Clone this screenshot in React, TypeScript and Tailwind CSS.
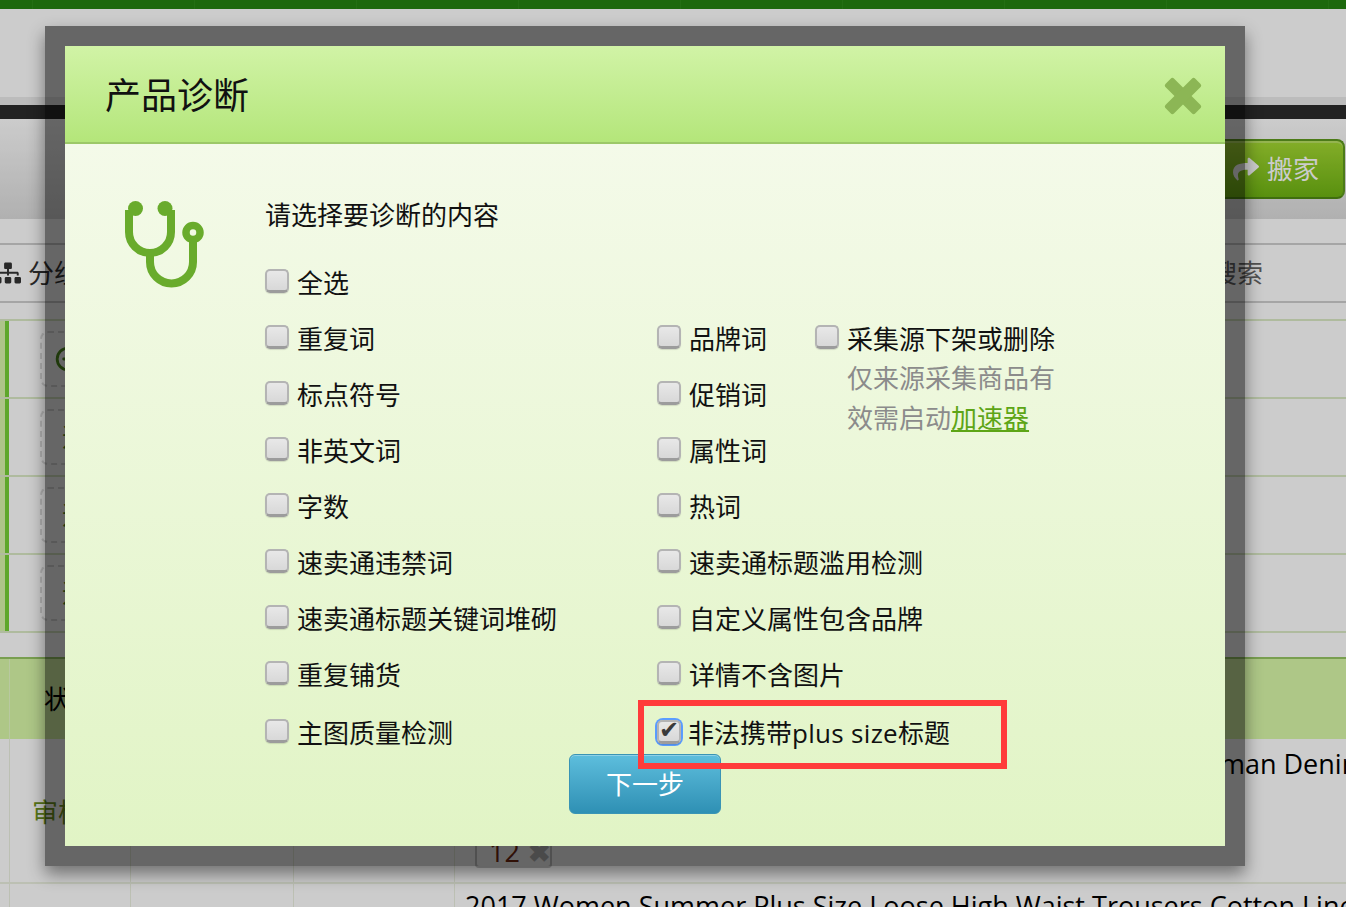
import { FaSitemap, FaShare } from "react-icons/fa";
import { CircleMinus } from "lucide-react";

const font = "font-['Open_Sans','Noto_Sans_CJK_SC',sans-serif]";

function Box() {
  return (
    <input
      type="checkbox"
      readOnly
      className="appearance-none block w-6 h-6 shrink-0 -mt-1 rounded-[5px] border-2 border-b-[3px] border-[#b4b4b4] border-b-[#9c9c9c] bg-gradient-to-b from-[#e8e8e8] to-[#d8d8d8] shadow-[0_1px_1px_rgba(0,0,0,0.12)]"
    />
  );
}

function Item({ label }: { label: string }) {
  return (
    <label className="flex items-center gap-2 h-14 whitespace-nowrap">
      <Box />
      <span>{label}</span>
    </label>
  );
}

const leftItems = ["重复词", "标点符号", "非英文词", "字数", "速卖通违禁词", "速卖通标题关键词堆砌", "重复铺货"];
const rightItems = ["品牌词", "促销词", "属性词", "热词", "速卖通标题滥用检测", "自定义属性包含品牌", "详情不含图片"];

function Stethoscope() {
  return (
    <svg viewBox="0 0 90 96" className="w-[90px] h-[96px]" fill="none" stroke="#69ab2c" strokeWidth="8">
      <path d="M7 9V31A21 21 0 0 0 49 31V9" />
      <path d="M28 52V61A21.5 21.5 0 0 0 71 61V40" />
      <circle cx="13.5" cy="7.5" r="7.5" fill="#69ab2c" stroke="none" />
      <circle cx="43" cy="7.5" r="7.5" fill="#69ab2c" stroke="none" />
      <circle cx="71" cy="31.5" r="7" strokeWidth="7.5" />
    </svg>
  );
}

function CloseIcon() {
  return (
    <svg viewBox="0 0 38 38" className="w-[38px] h-[38px] mt-1" fill="#8cb655">
      <rect x="-2" y="13" width="42" height="12" rx="2.5" transform="rotate(45 19 19)" />
      <rect x="-2" y="13" width="42" height="12" rx="2.5" transform="rotate(-45 19 19)" />
    </svg>
  );
}

function Background() {
  return (
    <div className="absolute inset-0 overflow-hidden bg-white text-[26px] text-[#333]">
      <div className="h-[9px] bg-[#238210] flex pl-8">
        {Array.from({ length: 9 }).map((_, i) => (
          <div key={i} className="w-[162px] shrink-0 border-l border-[#2c8a18]" />
        ))}
      </div>
      <div className="h-[88px]" />
      <div className="h-2 bg-[#ebebeb]" />
      <div className="h-3.5 bg-[#2b2b2b]" />
      <div className="h-[100px] bg-gradient-to-b from-[#ffffff] to-[#dddddd] flex justify-end items-center pr-px">
        <div className="flex items-center justify-end gap-2 w-[160px] h-[60px] pr-6 rounded-lg border-2 border-[#5f9a1e] border-b-[#4f8a12] bg-gradient-to-b from-[#a5d932] to-[#6fb512] text-white shadow-[inset_0_2px_0_rgba(255,255,255,0.25)]">
          <FaShare className="text-[26px]" />
          <span>搬家</span>
        </div>
      </div>
      <div className="h-6" />
      <div className="h-[60px] flex items-center justify-between border-y-2 border-[#cfcfcf] pr-[83px]">
        <div className="flex items-center gap-[7px] -ml-[5px]">
          <FaSitemap className="text-[26px]" />
          <span>分组</span>
        </div>
        <span className="text-[#666]">搜索</span>
      </div>
      <div className="h-[16px]" />
      {["", "速", "速", "速"].map((c, i) => (
        <div key={i} className="h-[78px] flex border-t-2 border-[#dbeac6]">
          <div className="w-[5px] bg-[#d9f5ac]" />
          <div className="w-1 bg-[#75d136]" />
          <div className="pl-[31px] pt-[10px]">
            <div className="w-[100px] h-[56px] rounded-lg border-2 border-dashed border-[#dedede] flex items-center pl-[13px] text-[#4f8f1d]">
              {c ? <span className="ml-[7px]">{c}</span> : <CircleMinus size={26} strokeWidth={2.6} />}
            </div>
          </div>
        </div>
      ))}
      <div className="h-[26px] border-t-2 border-[#dbeac6]" />
      <div className="grid grid-cols-[10px_121px_163px_161px_1fr] h-[82px] bg-[#daf9a9] border-t-2 border-[#98c764] text-black">
        <div className="border-r border-[#e6fac8]" />
        <div className="pl-[34px] pt-px flex items-center border-r border-[#e6fac8]">状态</div>
        <div className="border-r border-[#e6fac8]" />
        <div className="border-r border-[#e6fac8]" />
        <div />
      </div>
      <div className="grid grid-cols-[10px_121px_163px_161px_1fr] h-[145px] border-b-2 border-[#ecf0e0]">
        <div className="border-r border-[#ecf0e0]" />
        <div className="pl-[22px] pt-[54px] border-r border-[#ecf0e0] text-[#6f9420]">审核中</div>
        <div className="border-r border-[#ecf0e0]" />
        <div className="border-r border-[#ecf0e0]" />
        <div className={`pl-[10px] pt-[5px] whitespace-nowrap text-black text-[27px] ${font}`}>
          <div>2017 Summer New Fashion Ripped Hole Slim High Waist Woman Denim Jeans Pants</div>
          <div className="mt-[50px] ml-[10px] w-[77px] h-[33px] rounded border-2 border-[#c8c8c8] flex items-center gap-2 pl-[12px] text-[#7a2a10] leading-none">
            12 <span className="text-[#bbb] font-bold">✖</span>
          </div>
        </div>
      </div>
      <div className="grid grid-cols-[10px_121px_163px_161px_1fr]">
        <div className="border-r border-[#ecf0e0] h-6" />
        <div className="border-r border-[#ecf0e0]" />
        <div className="border-r border-[#ecf0e0]" />
        <div className="border-r border-[#ecf0e0]" />
        <div className={`pl-[10px] pt-[2px] whitespace-nowrap text-black text-[27px] ${font}`}>
          2017 Women Summer Plus Size Loose High Waist Trousers Cotton Linen Pants
        </div>
      </div>
    </div>
  );
}

export default function App() {
  return (
    <div className={`relative h-screen min-h-[907px] overflow-hidden ${font}`}>
      <Background />
      <div className="absolute inset-0 bg-black/20" />
      <div className="absolute left-[45px] top-[26px] w-[1200px] h-[840px] border-[20px] border-black/50 bg-clip-padding shadow-[0_8px_16px_rgba(0,0,0,0.45)] flex flex-col">
        <div className="h-[98px] shrink-0 flex items-center justify-between pl-10 pr-[23px] border-b-2 border-[#9cc868] bg-gradient-to-b from-[#d1f3a6] to-[#b4e67a]">
          <h1 className="text-[36px] font-normal text-[#111] leading-none mt-1">产品诊断</h1>
          <CloseIcon />
        </div>
        <div className="relative flex-1 flex flex-col items-center bg-gradient-to-b from-[#f4fae9] to-[#e1f4c5] text-[26px] text-[#111]">
          <div className="w-full flex pt-[57px]">
            <div className="w-[200px] shrink-0 pl-[57px]">
              <Stethoscope />
            </div>
            <div>
              <p className="h-[28px] leading-[28px] mb-[26px]">请选择要诊断的内容</p>
              <Item label="全选" />
              <div className="flex">
                <div className="w-[392px]">
                  {leftItems.map((t) => (
                    <Item key={t} label={t} />
                  ))}
                </div>
                <div className="w-[158px]">
                  {rightItems.map((t) => (
                    <Item key={t} label={t} />
                  ))}
                </div>
                <div className="w-[240px]">
                  <Item label="采集源下架或删除" />
                  <p className="w-[240px] pl-8 -mt-2 leading-[39.5px] text-[#8b8b8b]">
                    仅来源采集商品有效需启动
                    <a href="#" className="text-[#5da516] underline">
                      加速器
                    </a>
                  </p>
                </div>
              </div>
              <div className="flex h-[60px] items-center">
                <div className="w-[392px]">
                  <label className="flex items-center gap-2 whitespace-nowrap">
                    <Box />
                    <span>主图质量检测</span>
                  </label>
                </div>
                <label className="flex items-center gap-[7px] whitespace-nowrap">
                  <span className="relative block rounded-md -mt-0.5 ring-2 ring-[#5b9dff]">
                    <span className="block mt-1">
                      <Box />
                    </span>
                    <span className="absolute left-[2px] top-[-3px] text-[24px] leading-[26px] text-[#3a3a3a] font-['DejaVu_Sans',sans-serif]">
                      ✔
                    </span>
                  </span>
                  <span>
                    非法携带<span className="tracking-[0.3px]">plus size</span>标题
                  </span>
                </label>
              </div>
            </div>
          </div>
          <button className="-mt-[9px] w-[152px] h-[60px] rounded-md border border-[#3a94b5] bg-gradient-to-b from-[#5dbedd] to-[#2e90b4] text-white text-[26px] shadow-[inset_0_1px_0_rgba(255,255,255,0.3)]">
            下一步
          </button>
          <div className="absolute left-[573px] top-[556px] w-[369px] h-[69px] border-[6px] border-[#ff3b3b]" />
        </div>
      </div>
    </div>
  );
}
